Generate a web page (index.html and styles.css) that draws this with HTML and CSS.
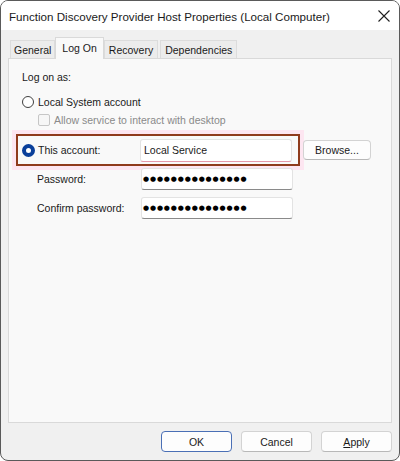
FILE: index.html
```html
<!DOCTYPE html>
<html lang="en">
<head>
    <meta charset="UTF-8">
    <meta name="viewport" content="width=device-width, initial-scale=1.0">
    <title>Function Discovery Provider Host Properties</title>
    <link rel="stylesheet" href="styles.css">
</head>
<body>
    <div class="window">
        <div class="titlebar">
            <span class="title">Function Discovery Provider Host Properties (Local Computer)</span>
            <svg class="close" width="12" height="12" viewBox="0 0 12 12">
                <path d="M0.5 0.5 L11.5 11.5 M11.5 0.5 L0.5 11.5" stroke="#1f1f1f" stroke-width="1.1" fill="none"/>
            </svg>
        </div>
        <div class="client">
            <div class="tabs">
                <div class="tab">General</div>
                <div class="tab active">Log On</div>
                <div class="tab">Recovery</div>
                <div class="tab">Dependencies</div>
            </div>
            <div class="panel">
                <div class="heading">Log on as:</div>
                <div class="option">
                    <span class="radio"></span>
                    <span>Local System account</span>
                </div>
                <div class="option sub disabled">
                    <span class="check"></span>
                    <span>Allow service to interact with desktop</span>
                </div>
                <div class="account-row">
                    <div class="highlight">
                        <span class="radio checked"></span>
                        <span class="label">This account:</span>
                        <div class="field marked">Local Service</div>
                    </div>
                    <button class="btn browse">Browse...</button>
                </div>
                <div class="field-row">
                    <span class="label">Password:</span>
                    <div class="field dots">●●●●●●●●●●●●●●●</div>
                </div>
                <div class="field-row second">
                    <span class="label">Confirm password:</span>
                    <div class="field dots">●●●●●●●●●●●●●●●</div>
                </div>
            </div>
            <div class="footer">
                <button class="btn default">OK</button>
                <button class="btn">Cancel</button>
                <button class="btn"><u>A</u>pply</button>
            </div>
        </div>
    </div>
</body>
</html>
```

FILE: styles.css
```css
body {
    margin: 0;
    background-color: #ffffff;
    font-family: "Liberation Sans", Arial, sans-serif;
    font-size: 10.5px;
    color: #1a1a1a;
}
.window {
    width: 400px;
    height: 461px;
    box-sizing: border-box;
    border: 1px solid #5a5a5a;
    border-radius: 8px;
    overflow: hidden;
    background-color: #f0f0f0;
    display: flex;
    flex-direction: column;
}
.titlebar {
    height: 29px;
    background-color: #ffffff;
    display: flex;
    align-items: center;
    padding: 0 9px 0 8px;
}
.title {
    font-size: 11.6px;
    flex: 1;
    padding-top: 1px;
}
.close {
    margin-top: 1px;
    margin-right: 0;
}
.client {
    flex: 1;
    padding: 7px 7px 0 7px;
    display: flex;
    flex-direction: column;
}
.tabs {
    display: flex;
    align-items: flex-end;
    height: 21px;
    padding-left: 2px;
    position: relative;
    z-index: 1;
}
.tab {
    height: 18px;
    line-height: 18px;
    padding: 0 4px;
    margin-right: 2px;
    background-color: #ececec;
    border: 1px solid #dcdcdc;
    border-bottom: none;
    box-sizing: border-box;
}
.tab:first-child {
    padding: 0 3px;
}
.tab.active {
    height: 22px;
    line-height: 20px;
    margin: 0 0 -1px -2px;
    padding: 0 6px;
    background-color: #f9f9f9;
    border-color: #d9d9d9;
}
.panel {
    height: 365px;
    box-sizing: border-box;
    border: 1px solid #d9d9d9;
    background-color: #f9f9f9;
    padding: 10px 0 0 13px;
}
.heading {
    line-height: 16px;
}
.option {
    display: flex;
    align-items: center;
    height: 16px;
    margin-top: 9px;
}
.option.sub {
    margin-top: 2px;
    padding-left: 16px;
}
.disabled {
    color: #8a8a8a;
}
.radio {
    width: 12px;
    height: 12px;
    box-sizing: border-box;
    border: 1px solid #404040;
    border-radius: 50%;
    background-color: #ffffff;
    margin-right: 4px;
    flex-shrink: 0;
}
.radio.checked {
    width: 13px;
    height: 13px;
    border: 4px solid #0a3f9a;
    background-color: #ffffff;
    margin-right: 3px;
}
.check {
    width: 12px;
    height: 12px;
    box-sizing: border-box;
    border: 1px solid #c6c6c6;
    border-radius: 2px;
    background-color: #f6f6f6;
    margin-right: 4px;
}
.account-row {
    display: flex;
    align-items: center;
    margin: 6px 0 0 -6px;
}
.highlight {
    width: 284px;
    height: 32px;
    box-sizing: border-box;
    border: 2px solid #8f3b1c;
    box-shadow: 0 0 0 4px #fde6f1;
    display: flex;
    align-items: center;
    padding-left: 4px;
}
.label {
    width: 102px;
    flex-shrink: 0;
}
.field {
    width: 152px;
    height: 23px;
    box-sizing: border-box;
    background-color: #ffffff;
    border: 1px solid #e3e3e3;
    border-bottom-color: #8a8a8a;
    border-radius: 3px;
    padding-left: 3px;
    display: flex;
    align-items: center;
}
.field.marked {
    border-bottom-color: #e59aaa;
}
.field-row {
    display: flex;
    align-items: center;
    margin-top: 2px;
    padding-left: 15px;
}
.field-row.second {
    margin-top: 7px;
}
.field-row .label {
    width: 104px;
}
.field-row .field {
    height: 22px;
}
.dots {
    font-family: "DejaVu Sans", sans-serif;
    font-size: 7px;
    letter-spacing: 0.85px;
    padding-left: 1px;
    color: #000000;
}
.btn {
    font-family: "Liberation Sans", Arial, sans-serif;
    font-size: 10.5px;
    color: #1a1a1a;
    background-color: #fdfdfd;
    border: 1px solid #d3d3d3;
    border-bottom-color: #b8b8b8;
    border-radius: 4px;
    height: 21px;
    width: 71px;
    padding: 0;
    box-sizing: border-box;
}
.browse {
    width: 68px;
    height: 20px;
    margin-left: 3px;
}
.footer {
    display: flex;
    justify-content: flex-end;
    gap: 9px;
    margin-top: 8px;
}
.btn.default {
    border: 1.5px solid #4a6fb5;
}
```
